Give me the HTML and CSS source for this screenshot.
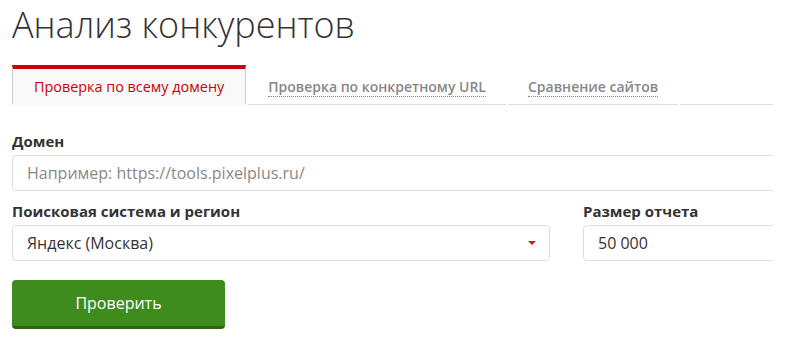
FILE: index.html
```html
<!DOCTYPE html>
<html lang="ru">
<head>
<meta charset="utf-8">
<title>Анализ конкурентов</title>
<link rel="stylesheet" href="styles.css">
</head>
<body>
<div class="page">
  <h1 class="title">Анализ конкурентов</h1>
  <div class="clip">
    <div class="inner">
      <nav class="tabs">
        <div class="tab tab-active"><span>Проверка по всему домену</span></div>
        <div class="tab"><span class="tab-link">Проверка по конкретному URL</span></div>
        <div class="tab"><span class="tab-link">Сравнение сайтов</span></div>
        <div class="tab-fill"></div>
      </nav>
      <form class="form">
        <div class="field">
          <label class="label">Домен</label>
          <input class="input" type="text" placeholder="Например: https://tools.pixelplus.ru/">
        </div>
        <div class="row">
          <div class="field">
            <label class="label">Поисковая система и регион</label>
            <div class="select">
              <span>Яндекс (Москва)</span>
              <span class="caret"></span>
            </div>
          </div>
          <div class="field">
            <label class="label">Размер отчета</label>
            <input class="input" type="text" value="50 000">
          </div>
        </div>
        <button type="button" class="btn">Проверить</button>
      </form>
    </div>
  </div>
</div>
</body>
</html>
```
FILE: styles.css
```css
* { box-sizing: border-box; }
html, body { margin: 0; padding: 0; background: #fff; }
body { font-family: "Open Sans", "Liberation Sans", sans-serif; color: #333; }
.page { padding: 0 12px; }
.title {
  margin: 0;
  font-size: 36px;
  font-weight: 300;
  line-height: 49px;
  color: #333;
}
.clip { width: 761px; overflow: hidden; margin-top: 16px; }
.inner { width: 800px; }
.tabs { display: flex; gap: 2px; align-items: flex-end; }
.tab {
  font-size: 14px;
  font-weight: 600;
  line-height: 20px;
  padding: 8px 20px 7px;
  border-bottom: 1px solid #ddd;
  color: #888;
}
.tab-active {
  font-size: 14.4px;
  font-weight: 400;
  color: #cc0000;
  background: #f9f9f9;
  border-top: 4px solid #cc0000;
  border-left: 1px solid #cfcfcf;
  border-right: 1px solid #cfcfcf;
  border-bottom: 1px solid #f9f9f9;
  padding: 8px 21px 7px;
}
.tab-link { border-bottom: 1px dotted #888; }
.tab-fill { flex: 1; border-bottom: 1px solid #ddd; }
.form { padding-top: 26px; }
.field { display: flex; flex-direction: column; gap: 4px; margin-bottom: 10px; }
.label { font-size: 15px; font-weight: 700; line-height: 20px; color: #333; }
.input, .select {
  height: 36px;
  border: 1px solid #ddd;
  border-radius: 4px;
  padding: 0 14px;
  font-family: "Open Sans", "Liberation Sans", sans-serif;
  font-size: 16px;
  color: #333;
  background: #fff;
  outline: none;
  width: 100%;
}
.input::placeholder { color: #888; opacity: 1; }
.select { display: flex; align-items: center; justify-content: space-between; padding-right: 13px; }
.caret {
  width: 0; height: 0;
  border-left: 4px solid transparent;
  border-right: 4px solid transparent;
  border-top: 4px solid #e2101c;
}
.row { display: grid; grid-template-columns: 538px 1fr; column-gap: 33px; }
.row .field { margin-bottom: 0; }
.btn {
  margin-top: 19px;
  width: 213px;
  height: 49px;
  background: #3f8c1e;
  border: none;
  border-bottom: 3px solid #2c6512;
  border-radius: 4px;
  color: #fff;
  font-family: "Open Sans", "Liberation Sans", sans-serif;
  font-size: 16px;
  padding: 0;
  cursor: pointer;
}
```
